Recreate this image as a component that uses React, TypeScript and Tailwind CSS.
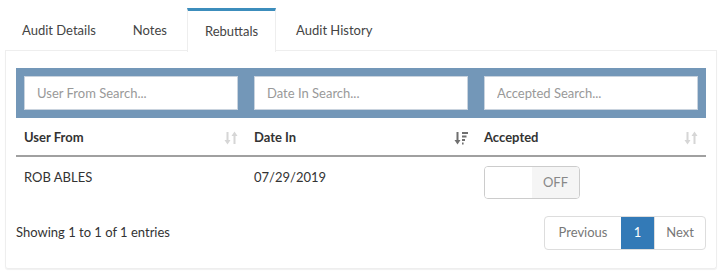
import React from "react";

const tabs = ["Audit Details", "Notes", "Rebuttals", "Audit History"];

const SortBoth = () => (
  <svg width="14" height="16" viewBox="0 0 14 16" fill="#d6d6d6">
    <rect x="2.5" y="2" width="2" height="9" />
    <path d="M0.5 10 L6.5 10 L3.5 14.5 Z" />
    <rect x="9.5" y="5" width="2" height="9" />
    <path d="M7.5 6 L13.5 6 L10.5 1.5 Z" />
  </svg>
);

const SortDesc = () => (
  <svg width="14" height="16" viewBox="0 0 14 16" fill="#6f6f6f">
    <rect x="2.5" y="2" width="2" height="9" />
    <path d="M0.5 10 L6.5 10 L3.5 14.5 Z" />
    <rect x="8" y="2" width="6" height="2" />
    <rect x="8" y="5.5" width="4.5" height="2" />
    <rect x="8" y="9" width="3" height="2" />
    <rect x="8" y="12.5" width="1.6" height="2" />
  </svg>
);

export default function App() {
  const font = { fontFamily: "Lato, 'Liberation Sans', sans-serif" };
  return (
    <div className="w-[720px] h-[275px] bg-white text-[13px] text-[#333]" style={font}>
      <div className="ml-[5px] w-[712px] pt-[8px]">
        {/* Tabs */}
        <div className="flex border-b border-[#eeeeee] h-[43px]">
          {tabs.map((t) => {
            const active = t === "Rebuttals";
            return (
              <div
                key={t}
                className={
                  active
                    ? "mr-[3px] px-[17px] flex items-center border-t-[3px] border-t-[#3c8dbc] border-x border-x-[#eeeeee] bg-white -mb-px h-[44px] text-[#444]"
                    : "mr-[3px] px-[17px] flex items-center pt-[3px] text-[#444]"
                }
              >
                {t}
              </div>
            );
          })}
        </div>

        {/* Card body */}
        <div className="border-x border-b border-[#eeeeee] rounded-b-[3px] shadow-[0_1px_1px_rgba(0,0,0,0.06)] px-[10px] pt-[17px] pb-[18px]">
          {/* Filter row */}
          <div className="grid grid-cols-3 bg-[#7397b8] py-[8px]">
            {["User From Search...", "Date In Search...", "Accepted Search..."].map((p) => (
              <div key={p} className="px-[8px]">
                <input
                  placeholder={p}
                  className="w-full h-[34px] bg-white border border-[#c9d3de] px-[12px] text-[13px] placeholder:text-[#999] outline-none"
                  style={font}
                />
              </div>
            ))}
          </div>

          {/* Header */}
          <div className="grid grid-cols-3 border-b-2 border-[#a0a0a0] h-[39px] pt-[3px] items-center font-bold text-[#333]">
            <div className="px-[8px] flex items-center justify-between">
              <span>User From</span>
              <SortBoth />
            </div>
            <div className="px-[8px] flex items-center justify-between">
              <span>Date In</span>
              <SortDesc />
            </div>
            <div className="px-[8px] flex items-center justify-between">
              <span>Accepted</span>
              <SortBoth />
            </div>
          </div>

          {/* Row */}
          <div className="grid grid-cols-3 h-[50px] pt-[9px]">
            <div className="px-[8px] leading-[22px]">ROB ABLES</div>
            <div className="px-[8px] leading-[22px]">07/29/2019</div>
            <div className="px-[8px]">
              <div className="w-[96px] h-[33px] border border-[#cccccc] rounded-[4px] flex overflow-hidden">
                <div className="flex-1 bg-white" />
                <div className="flex-1 bg-[#f5f5f5] flex items-center justify-center text-[#888]">
                  OFF
                </div>
              </div>
            </div>
          </div>

          {/* Footer */}
          <div className="flex items-center justify-between mt-[9px]">
            <span className="text-[#333]">Showing 1 to 1 of 1 entries</span>
            <div className="flex h-[34px] border border-[#dddddd] rounded-[4px] overflow-hidden">
              <div className="w-[76px] flex items-center justify-center text-[#777]">Previous</div>
              <div className="w-[33px] flex items-center justify-center bg-[#337ab7] text-white">1</div>
              <div className="w-[51px] flex items-center justify-center border-l border-[#dddddd] text-[#777]">
                Next
              </div>
            </div>
          </div>
        </div>
      </div>
    </div>
  );
}
